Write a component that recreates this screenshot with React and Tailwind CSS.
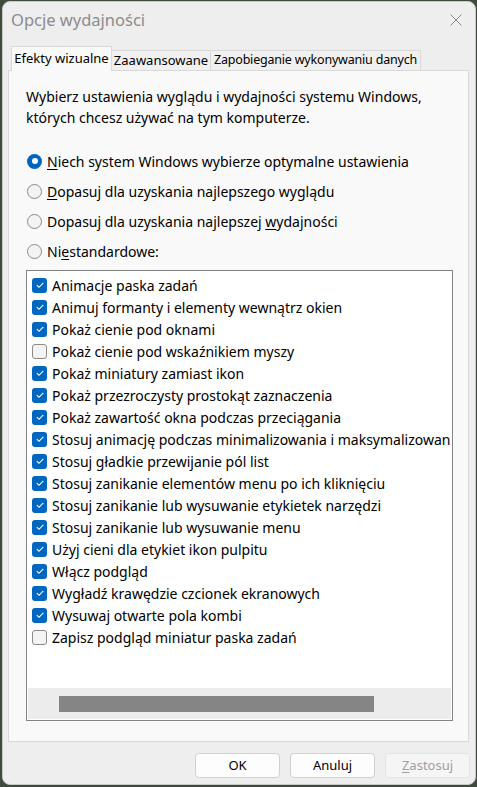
import React from "react";

const items = [
  ["Animacje paska zadań", true],
  ["Animuj formanty i elementy wewnątrz okien", true],
  ["Pokaż cienie pod oknami", true],
  ["Pokaż cienie pod wskaźnikiem myszy", false],
  ["Pokaż miniatury zamiast ikon", true],
  ["Pokaż przezroczysty prostokąt zaznaczenia", true],
  ["Pokaż zawartość okna podczas przeciągania", true],
  ["Stosuj animację podczas minimalizowania i maksymalizowania okien", true],
  ["Stosuj gładkie przewijanie pól list", true],
  ["Stosuj zanikanie elementów menu po ich kliknięciu", true],
  ["Stosuj zanikanie lub wysuwanie etykietek narzędzi", true],
  ["Stosuj zanikanie lub wysuwanie menu", true],
  ["Użyj cieni dla etykiet ikon pulpitu", true],
  ["Włącz podgląd", true],
  ["Wygładź krawędzie czcionek ekranowych", true],
  ["Wysuwaj otwarte pola kombi", true],
  ["Zapisz podgląd miniatur paska zadań", false],
];

function Radio({ checked, children }) {
  return (
    <div className="flex items-center h-[30px]">
      {checked ? (
        <div className="w-[15px] h-[15px] rounded-full bg-[#0067c0] flex items-center justify-center ml-[1px]">
          <div className="w-[6px] h-[6px] rounded-full bg-white" />
        </div>
      ) : (
        <div className="w-[15px] h-[15px] rounded-full border border-[#8a8a8a] bg-[#f3f3f3] ml-[1px]" />
      )}
      <span className="ml-[5px]">{children}</span>
    </div>
  );
}

function Check({ checked }) {
  return checked ? (
    <div className="w-[15px] h-[15px] rounded-[3px] bg-[#0067c0] flex items-center justify-center shrink-0">
      <svg width="10" height="10" viewBox="0 0 10 10">
        <path d="M1.8 5.2 L4 7.3 L8.3 2.8" fill="none" stroke="white" strokeWidth="1.1" />
      </svg>
    </div>
  ) : (
    <div className="w-[15px] h-[15px] rounded-[3px] border border-[#8a8a8a] bg-[#f4f4f4] shrink-0" />
  );
}

export default function App() {
  return (
    <div
      className="w-[477px] h-[787px] bg-[#3f4b3c] pl-[2px] pr-[1px] pt-[1px] pb-[2px]"
      style={{ fontFamily: '"Noto Sans", "Open Sans", sans-serif' }}
    >
      <div className="w-full h-full rounded-[8px] bg-[#eeeeee] border border-[#c9c9c9] flex flex-col text-black text-[14px]">
        <div className="h-[44px] flex items-center justify-between pl-[8px] pr-[8px] shrink-0">
          <span className="text-[16.5px] text-[#8c8c8c] -mt-[8px]">Opcje wydajności</span>
          <svg width="14" height="14" viewBox="0 0 14 14" className="-mt-[8px] mr-[4px]">
            <path d="M1.5 1.5 L12.5 12.5 M12.5 1.5 L1.5 12.5" stroke="#8a8a8a" strokeWidth="1" />
          </svg>
        </div>
        <div className="flex items-end pl-[8px] h-[24px] shrink-0 relative z-10 whitespace-nowrap">
          <div className="w-[101px] h-[25px] bg-[#f9f9f9] border border-[#d9d9d9] border-b-0 flex items-center justify-center text-[13px] -mb-[1px]">
            Efekty wizualne
          </div>
          <div className="w-[99px] h-[20px] bg-[#f0f0f0] border border-[#d9d9d9] border-l-0 border-b-0 flex items-center justify-center text-[13px]">
            Zaawansowane
          </div>
          <div className="w-[210px] h-[20px] bg-[#f0f0f0] border border-[#d9d9d9] border-l-0 border-b-0 flex items-center justify-center text-[12.5px] tracking-[-0.2px]">
            Zapobieganie wykonywaniu danych
          </div>
        </div>
        <div className="mx-[5px] w-[461px] h-[672px] bg-[#f9f9f9] border border-[#d9d9d9] pt-[15px] pl-[17px] pr-[15px] pb-[20px] flex flex-col">
          <p className="leading-[21px]">
            Wybierz ustawienia wyglądu i wydajności systemu Windows,
            <br />
            których chcesz używać na tym komputerze.
          </p>
          <div className="mt-[18px] flex flex-col">
            <Radio checked>
              <span className="underline underline-offset-2">N</span>iech system Windows wybierze optymalne ustawienia
            </Radio>
            <Radio>
              <span className="underline underline-offset-2">D</span>opasuj dla uzyskania najlepszego wyglądu
            </Radio>
            <Radio>
              Dopasuj dla uzyskania najlepszej <span className="underline underline-offset-2">w</span>ydajności
            </Radio>
            <Radio>
              Ni<span className="underline underline-offset-2">e</span>standardowe:
            </Radio>
          </div>
          <div className="mt-[4px] flex-1 bg-white border border-[#848484] flex flex-col overflow-hidden p-[1px]">
            <div className="flex-1 overflow-hidden pt-[2px] pl-[4px]">
              {items.map(([label, c]) => (
                <div key={label} className="h-[22px] flex items-center whitespace-nowrap">
                  <Check checked={c} />
                  <span className="ml-[5px]">{label}</span>
                </div>
              ))}
            </div>
            <div className="h-[31px] bg-[#ececec] flex items-center pl-[31px] shrink-0">
              <div className="w-[315px] h-[16px] bg-[#858585]" />
            </div>
          </div>
        </div>
        <div className="flex justify-end gap-[10px] pr-[5px] pt-[11px]">
          <button className="w-[85px] h-[25px] bg-[#fdfdfd] border border-[#d0d0d0] rounded-[4px] text-[13px]">OK</button>
          <button className="w-[85px] h-[25px] bg-[#fdfdfd] border border-[#d0d0d0] rounded-[4px] text-[13px]">Anuluj</button>
          <button className="w-[85px] h-[25px] bg-[#f5f5f5] border border-[#e5e5e5] rounded-[4px] text-[13px] text-[#a0a0a0]">
            <span className="underline underline-offset-2">Z</span>astosuj
          </button>
        </div>
      </div>
    </div>
  );
}
